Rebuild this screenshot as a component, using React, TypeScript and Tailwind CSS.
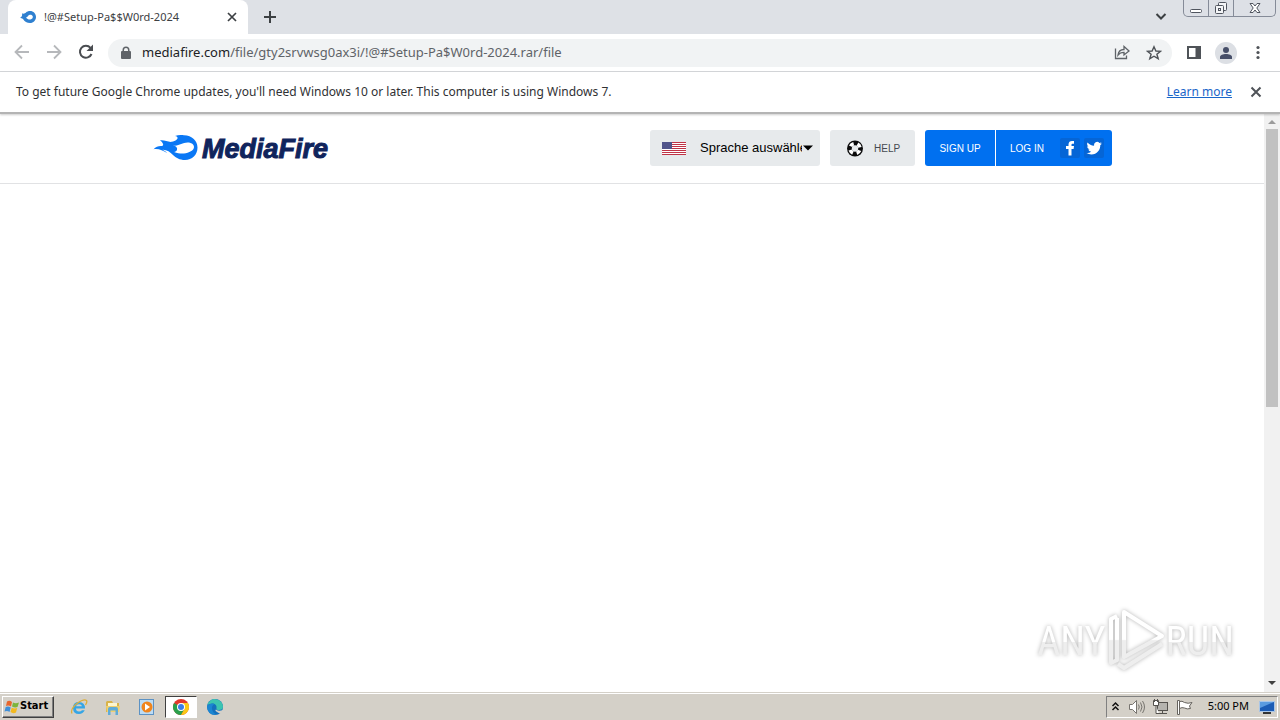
import type { ReactNode } from "react";

const iconButton = "flex shrink-0 items-center justify-center";

function FlameMark({ className, fill }: { className: string; fill: string }) {
  return (
    <svg viewBox="0 0 46 26" className={className} fill={fill} aria-hidden="true">
      <path
        fillRule="evenodd"
        d="M0.500 14.200C3 11.800 5.500 10.800 8.500 11C10.500 11 10.500 9.500 9.500 8C9 7 8 6 7 5.500C11 4.500 15 7.500 19 6.800C21.500 6.400 24 5 24.500 3.500C25 2.300 24 1.200 22 0.900C25 0 28 0 31 0.300C39 0.600 44.500 6 44.500 12.500C44.500 20 39 25 32 25C26.500 25 23 22.800 20 20C17 17 14 14.500 9.500 14.700C11.500 15.500 13 16.500 14 18C10 15.500 5 13 0.500 14.200ZM20 10.500C23 11 24.700 12.800 24 14.800C23.500 16.200 22.500 16.800 21 17C25 18.300 28 18.800 31 18.400C36 18 41 15.500 41 12C41 9 37.500 7.500 34.500 7.600C29 7.700 26 11.500 20 10.500Z"
      />
    </svg>
  );
}

function TabStrip() {
  return (
    <div className="flex h-[34px] items-start bg-[#dee1e6] pl-2">
      <div className="flex h-[34px] w-60 items-center rounded-t-lg bg-white pl-3 pr-2.5 text-[#3c4043]">
        <svg viewBox="0 0 16 16" className="size-4 shrink-0" aria-hidden="true">
          <path
            fillRule="evenodd"
            fill="#2f80d0"
            d="M0 9C2 7.500 2.500 6.500 2 4.500C4 4.800 5 4.600 6 3.500C7 2.500 8.500 2 10 2C13.500 2 16 4.700 16 8C16 11.300 13.500 14 10 14C7 14 4.500 12.500 3 10C2 9 1 9 0 9ZM6 8.500C7.500 10.500 9 10.600 10.500 10.400C12 10.200 13 9 12.800 7.500C12.500 6 11 5.400 9.700 5.700C8 6 8 8 6 8.500Z"
          />
        </svg>
        <span className="ml-2 flex-1 text-[11px]">!@#Setup-Pa$$W0rd-2024</span>
        <button aria-label="Close tab" className={`${iconButton} size-3`}>
          <svg viewBox="0 0 12 12" className="size-3" stroke="#3c4043" strokeWidth="1.700">
            <path d="M2 2L10 10M10 2L2 10" />
          </svg>
        </button>
      </div>
      <button aria-label="New tab" className={`${iconButton} ml-3.5 mt-2.5 size-4`}>
        <svg viewBox="0 0 16 16" className="size-4" stroke="#3c4043" strokeWidth="2">
          <path d="M8 1V13M2 7H14" />
        </svg>
      </button>
      <div className="flex-1" />
      <button aria-label="Search tabs" className={`${iconButton} mr-4 mt-2.5 size-3`}>
        <svg viewBox="0 0 12 12" className="size-3" fill="none" stroke="#3c4043" strokeWidth="2">
          <path d="M1.500 4L6 8.500L10.500 4" />
        </svg>
      </button>
      <div className="mr-1 flex h-[17px] overflow-hidden rounded-b-[5px] border border-t-0 border-[#858b98] bg-[#dde0e6]">
        <button aria-label="Minimize" className={`${iconButton} w-[25px] border-r border-[#858b98]`}>
          <svg viewBox="0 0 14 14" className="size-3.5" fill="#fff" stroke="#50555f">
            <rect x="1.500" y="8.500" width="11" height="3" rx="1" />
          </svg>
        </button>
        <button aria-label="Restore" className={`${iconButton} w-[25px] border-r border-[#858b98]`}>
          <svg viewBox="0 0 14 14" className="size-3.5" fill="#f4f5f7" stroke="#50555f">
            <rect x="4.500" y="1.500" width="8" height="8" rx="1" />
            <rect x="1.500" y="4.500" width="8" height="8" rx="1" />
            <rect x="4.500" y="7.500" width="2" height="2" />
          </svg>
        </button>
        <button aria-label="Close window" className={`${iconButton} w-[41px]`}>
          <svg viewBox="0 0 14 14" className="size-3.5" fill="#fff" stroke="#50555f">
            <path d="M2 2.500H5L7 5L9 2.500H12L8.800 7L12 11.500H9L7 9L5 11.500H2L5.200 7Z" />
          </svg>
        </button>
      </div>
    </div>
  );
}

function Toolbar() {
  return (
    <div className="flex h-[38px] items-center border-b border-[#d5d7da] bg-white pl-3 pr-3 text-[#5f6368]">
      <button aria-label="Back" className={`${iconButton} size-5`}>
        <svg viewBox="0 0 20 20" className="size-5" fill="none" stroke="#b6b8bb" strokeWidth="1.800">
          <path d="M17 9H4M10 2.500L3.500 9L10 15.500" />
        </svg>
      </button>
      <button aria-label="Forward" className={`${iconButton} ml-3 size-5`}>
        <svg viewBox="0 0 20 20" className="size-5" fill="none" stroke="#b6b8bb" strokeWidth="1.800">
          <path d="M3 9H16M10 2.500L16.500 9L10 15.500" />
        </svg>
      </button>
      <button aria-label="Reload" className={`${iconButton} ml-3 size-5`}>
        <svg viewBox="0 0 20 20" className="size-5" fill="none" stroke="#4a4d51" strokeWidth="2">
          <path d="M15.500 11A6 6 0 1 1 14.500 4.800" />
          <path d="M17 1.500V8H10.500Z" fill="#4a4d51" stroke="none" />
        </svg>
      </button>
      <div className="ml-3 flex h-7 flex-1 items-center rounded-full bg-[#f1f3f4] pl-3 pr-2.5">
        <svg viewBox="0 0 12 14" className="h-3.5 w-3 shrink-0" aria-hidden="true">
          <path
            fill="#5f6368"
            fillRule="evenodd"
            d="M2.500 5V4A3.500 3.500 0 0 1 9.500 4V5H10Q11 5 11 6V12Q11 13 10 13H2Q1 13 1 12V6Q1 5 2 5ZM4 5H8V4A2 2 0 0 0 4 4Z"
          />
        </svg>
        <div className="ml-2.5 flex-1 whitespace-nowrap text-[13px]">
          <span className="text-[#202124]">mediafire.com</span>
          <span>/file/gty2srvwsg0ax3i/!@#Setup-Pa$W0rd-2024.rar/file</span>
        </div>
        <button aria-label="Share" className={`${iconButton} size-4`}>
          <svg viewBox="0 0 16 16" className="size-4" fill="none" stroke="#5f6368" strokeWidth="1.300">
            <path d="M1.500 3.500V13.500H12.500V10.500" />
            <path d="M4 10C4.500 6 7 4.500 10 4.500V1.500L15 6L10 10V7.300C7.500 7.300 5.500 8 4 10Z" />
          </svg>
        </button>
        <button aria-label="Bookmark this page" className={`${iconButton} ml-4 size-4`}>
          <svg viewBox="0 0 16 16" className="size-4" fill="none" stroke="#4f5358" strokeWidth="1.400">
            <path d="M8 1.800L9.900 6L14.500 6.300L10.900 9.200L12.200 13.700L8 11.200L3.800 13.700L5.100 9.200L1.500 6.300L6.100 6Z" />
          </svg>
        </button>
      </div>
      <button aria-label="Side panel" className={`${iconButton} ml-3.5 size-4`}>
        <svg viewBox="0 0 16 16" className="size-4" aria-hidden="true">
          <rect x="2" y="2" width="12" height="11" fill="none" stroke="#4f5358" strokeWidth="2" />
          <rect x="9.500" y="2" width="5" height="11" fill="#4f5358" />
        </svg>
      </button>
      <button aria-label="Profile" className={`${iconButton} ml-[13px] size-[22px] rounded-full bg-[#dcdfe4]`}>
        <svg viewBox="0 0 16 16" className="size-4" fill="#474f69">
          <circle cx="8" cy="5" r="3" />
          <path d="M2 14V12C2 10 5 9 8 9C11 9 14 10 14 12V14Z" />
        </svg>
      </button>
      <button aria-label="Menu" className={`${iconButton} -mr-px ml-3 size-5`}>
        <svg viewBox="0 0 20 20" className="size-5" fill="#4f5358">
          <circle cx="9" cy="4.500" r="1.600" />
          <circle cx="9" cy="9.500" r="1.600" />
          <circle cx="9" cy="14.500" r="1.600" />
        </svg>
      </button>
    </div>
  );
}

function InfoBar() {
  return (
    <div className="relative flex h-[42px] items-center border-b-2 border-[#b4b4b4] bg-white pl-4 pr-[18px] text-[12px] text-[#303134] shadow-[0_1px_2px_rgba(0,0,0,0.2)]">
      <span className="flex-1">
        To get future Google Chrome updates, you'll need Windows 10 or later. This computer is using Windows 7.
      </span>
      <a href="#learn" className="text-[#1a66c9] underline">
        Learn more
      </a>
      <button aria-label="Dismiss" className={`${iconButton} ml-[18px] size-3`}>
        <svg viewBox="0 0 12 12" className="size-3" stroke="#4f5358" strokeWidth="2">
          <path d="M1.500 1.500L10.500 10.500M10.500 1.500L1.500 10.500" />
        </svg>
      </button>
    </div>
  );
}

function Flag() {
  return (
    <svg viewBox="0 0 24 13" className="h-[13px] w-6 shrink-0" aria-hidden="true">
      <rect width="24" height="13" fill="#fff" />
      {[0, 2, 4, 6, 8, 10, 12].map((y) => (
        <rect key={y} y={y} width="24" height="1" fill="#bf3346" />
      ))}
      <rect width="10" height="7" fill="#50548a" />
    </svg>
  );
}

function SiteHeader() {
  return (
    <header className="flex h-[70px] justify-center border-b border-[#e1e2e4] font-['Liberation_Sans',sans-serif]">
      <div className="flex h-[68px] w-[960px] items-center">
        <a href="#home" aria-label="MediaFire" className="flex items-center pl-px">
          <FlameMark className="h-[26px] w-[46px]" fill="#0a78f5" />
          <svg viewBox="0 0 144 34" className="h-[34px] w-36" aria-hidden="true">
            <text
              x="3"
              y="27"
              fontFamily="Liberation Sans"
              fontSize="27"
              fontWeight="bold"
              fontStyle="italic"
              fill="#10245c"
              stroke="#10245c"
            >
              MediaFire
            </text>
          </svg>
        </a>
        <div className="flex-1" />
        <div className="flex h-9 w-[170px] items-center rounded-[3px] bg-[#e7eaec] pl-3 pr-1.5">
          <Flag />
          <select
            aria-label="Language"
            className="ml-3.5 min-w-0 flex-1 appearance-none overflow-hidden bg-transparent text-[13px] text-black outline-none"
          >
            <option>Sprache auswählen</option>
          </select>
          <svg viewBox="0 0 12 6" className="h-1.5 w-3 shrink-0" aria-hidden="true">
            <path d="M1 0.500H11L6 5.500Z" />
          </svg>
        </div>
        <a
          href="#help"
          className="ml-2.5 flex h-9 w-[85px] items-center rounded-[3px] bg-[#e7eaec] pl-4 text-[10px] text-[#45494f]"
        >
          <svg viewBox="0 0 18 18" className="size-[18px]" aria-hidden="true">
            <circle cx="9" cy="9.500" r="8" fill="#0b0b0b" />
            <circle cx="9" cy="9.500" r="5" fill="none" stroke="#fff" strokeWidth="3.600" strokeDasharray="3.927 3.927" strokeDashoffset="-1.963" />
            <circle cx="9" cy="9.500" r="3.200" fill="#e7eaec" />
          </svg>
          <span className="ml-2.5">HELP</span>
        </a>
        <div className="ml-2.5 flex h-9 overflow-hidden rounded-[3px] bg-[#0070f0] text-[10px] text-white">
          <a href="#signup" className="flex w-[71px] items-center justify-center border-r border-white">
            SIGN UP
          </a>
          <a href="#login" className="flex w-[116px] items-center pl-3.5">
            <span className="flex-1">LOG IN</span>
            <span className="mr-2 flex gap-1">
              <svg viewBox="0 0 20 20" className="size-5" aria-hidden="true">
                <rect width="20" height="20" rx="2" fill="#0565d6" />
                <path
                  fill="#fff"
                  d="M8.500 17.500V11H6V8H8.500V6.500C8.500 4 10 3 12 3H14V5.700H12.700C11.700 5.700 11.500 6.200 11.500 7V8H14L13.600 11H11.500V17.500Z"
                />
              </svg>
              <svg viewBox="0 0 20 20" className="size-5" aria-hidden="true">
                <rect width="20" height="20" rx="2" fill="#0565d6" />
                <path
                  fill="#fff"
                  transform="translate(2.500 2.500) scale(0.640)"
                  d="M23.950 4.570a10 10 0 0 1-2.820.77 4.960 4.960 0 0 0 2.160-2.720 9.900 9.900 0 0 1-3.130 1.190 4.920 4.920 0 0 0-8.380 4.480C7.690 8.090 4.070 6.130 1.640 3.160a4.820 4.820 0 0 0-.67 2.470c0 1.710.87 3.210 2.190 4.100a4.900 4.900 0 0 1-2.230-.62v.06a4.920 4.920 0 0 0 3.950 4.830 5 5 0 0 1-2.210.08 4.940 4.940 0 0 0 4.600 3.420A9.870 9.870 0 0 1 0 19.540a14 14 0 0 0 7.550 2.210c9.050 0 14-7.500 14-13.980 0-.21 0-.42-.02-.63a9.940 9.940 0 0 0 2.460-2.550z"
                />
              </svg>
            </span>
          </a>
        </div>
      </div>
    </header>
  );
}

function Scrollbar() {
  return (
    <div className="flex w-4 shrink-0 flex-col items-center bg-[#f1f1f1]">
      <svg viewBox="0 0 16 15" className="h-[15px] w-4" aria-hidden="true">
        <path d="M4 10H12L8 6Z" fill="#9b9b9b" />
      </svg>
      <div className="h-[278px] w-3 bg-[#c1c1c1]" />
      <div className="flex-1" />
      <svg viewBox="0 0 16 16" className="size-4" aria-hidden="true">
        <path d="M4 5H12L8 9Z" fill="#404040" />
      </svg>
    </div>
  );
}

const watermarkWord =
  "mt-1 bg-linear-to-b from-white from-50% to-[#eeeeee] to-50% bg-clip-text text-[40px] leading-[52px] text-transparent";

function Watermark() {
  return (
    <div className="absolute bottom-5 right-[30px] flex items-center font-['Roboto_Condensed','Liberation_Sans_Narrow','Liberation_Sans',sans-serif] drop-shadow-[0_0_2px_rgba(0,0,0,0.3)]">
      <span className={watermarkWord}>ANY</span>
      <svg viewBox="69 0 60 64" className="h-16 w-[60px]" fill="none" aria-hidden="true">
        <defs>
          <linearGradient id="markFade" x1="0" y1="0" x2="0" y2="64" gradientUnits="userSpaceOnUse">
            <stop offset="0.49" stopColor="#ffffff" />
            <stop offset="0.51" stopColor="#eeeeee" />
          </linearGradient>
        </defs>
        <g stroke="url(#markFade)" strokeWidth="4" strokeLinejoin="round">
          <path d="M87 4L125 28L87 49V4Z" />
          <path d="M80 8L74 11V55L80 52V10" />
          <path d="M81 56L87 60L125 36" />
        </g>
      </svg>
      <span className={watermarkWord}>RUN</span>
    </div>
  );
}

function TaskButton({ label, active, children }: { label: string; active?: boolean; children: ReactNode }) {
  return (
    <button
      aria-label={label}
      className={
        active
          ? "flex h-[22px] w-8 items-center justify-center border border-b-white border-l-[#404040] border-r-white border-t-[#404040] bg-white"
          : "flex h-[22px] w-8 items-center justify-center"
      }
    >
      <svg viewBox="0 0 18 18" className="size-[18px]">
        {children}
      </svg>
    </button>
  );
}

function Taskbar() {
  return (
    <footer className="flex h-7 shrink-0 items-center border-t border-[#d4d0c8] bg-[#d4d0c8] pl-0.5 pr-0.5 shadow-[inset_0_1px_0_#fff]">
      <button className="flex h-[22px] w-[52px] items-center border border-b-[#404040] border-l-white border-r-[#404040] border-t-white pl-px text-[11px] font-bold text-black shadow-[inset_-1px_-1px_0_#808080]">
        <svg viewBox="0 0 16 16" className="size-4 shrink-0" aria-hidden="true">
          <path d="M3 2.500Q5.500 1 8 3L7 7.500Q4.500 6 2 7Z" fill="#e8662c" />
          <path d="M9 3.500Q11.500 5 15 3.500L13.500 8Q11 9 8 7.500Z" fill="#7db43c" />
          <path d="M1.700 8Q4.500 7 6.700 8.500L5.500 13Q3.500 11.500 0.500 12.500Z" fill="#3f8fd8" />
          <path d="M7.700 8.700Q10.500 10 13.200 9L12 13.500Q9 15 6.500 13Z" fill="#f3b91f" />
        </svg>
        <span className="font-['DejaVu_Sans_Condensed','Noto_Sans',sans-serif]">Start</span>
      </button>
      <nav className="ml-[9px] flex gap-0.5">
        <TaskButton label="Internet Explorer">
          <path d="M15 10.500H6Q6 13.500 9 13.500Q11 13.500 12 12.300H14.800Q13 16 9 16Q3 16 3 9.700Q3 4 9 4Q15 4 15 10.500ZM6 8.300H12Q11.700 6.200 9 6.200Q6.500 6.200 6 8.300Z" fill="#35a5e5" fillRule="evenodd" />
          <path d="M2 15.500Q0 11 7 5.500Q14 0.500 16.500 2.500Q17.500 3.800 15.500 7" fill="none" stroke="#dcae3a" strokeWidth="1.300" />
        </TaskButton>
        <TaskButton label="File Explorer">
          <path d="M2 4V14H15V5H9L8 3H3Z" fill="#d9b34a" />
          <path d="M4 5H13V9H4Z" fill="#fdf6cf" />
          <path d="M2 8H16L15 14H3Z" fill="#efd070" />
          <path d="M4 17V11Q4 9 6 9H12Q14 9 14 11V17H11.500V12.500H6.500V17Z" fill="#5fabd8" />
        </TaskButton>
        <TaskButton label="Media Player">
          <rect x="1.500" y="1.500" width="14" height="15" fill="#bcdcf5" stroke="#5c92c4" />
          <circle cx="9" cy="9" r="5.500" fill="#f0851d" />
          <path d="M7 5.500L12 9L7 12.500Z" fill="#fff" />
        </TaskButton>
        <TaskButton label="Chrome" active>
          <circle cx="9" cy="9" r="8" fill="#e2382b" />
          <path d="M9 9L2.070 5A8 8 0 0 0 9 17L12.500 11Z" fill="#2aa04c" />
          <path d="M9 17A8 8 0 0 0 15.930 5H9L12.500 11Z" fill="#fbc816" />
          <circle cx="9" cy="9" r="4" fill="#fff" />
          <circle cx="9" cy="9" r="3" fill="#3b7de8" />
        </TaskButton>
        <TaskButton label="Edge">
          <circle cx="9" cy="9" r="8" fill="#1470bd" />
          <path d="M1.300 7A8 8 0 0 1 17 8.500Q17 12 13 12Q10 12 10.500 10Q11 6.500 7.500 5.500Q4 5 1.300 7Z" fill="#3cc4b0" />
          <path d="M1 8.500Q4 4.500 8.500 6Q5.500 7.500 6 11Q6.500 15 11 16.700Q2 18 1 8.500Z" fill="#1b86d2" />
          <path d="M10 11.500Q12.500 13.700 17 12L18 15L15.500 15.500Q13 15.500 11 14Q8.500 12.500 10 11.500Z" fill="#d4d0c8" />
        </TaskButton>
      </nav>
      <div className="flex-1" />
      <div className="flex h-[22px] items-center border border-b-white border-l-[#808080] border-r-white border-t-[#808080] pl-1 pr-0.5">
        <svg viewBox="0 0 9 12" className="h-3 w-[9px]" fill="none" stroke="#111" strokeWidth="1.500" aria-hidden="true">
          <path d="M1.500 5L4.500 2L7.500 5M1.500 9L4.500 6L7.500 9" />
        </svg>
        <svg viewBox="0 0 18 16" className="ml-2 h-4 w-[18px]" fill="#fff" stroke="#77746f" aria-hidden="true">
          <path d="M1.500 5.500H4.500L8.500 1.500V14.500L4.500 10.500H1.500Z" />
          <path d="M10.500 5.500Q12 8 10.500 10.500M12.500 3.500Q15.500 8 12.500 12.500M14.500 2Q18.500 8 14.500 14" fill="none" />
        </svg>
        <svg viewBox="0 0 18 16" className="ml-1.5 h-4 w-[18px]" fill="#fff" stroke="#55524e" aria-hidden="true">
          <rect x="5.500" y="3.500" width="10" height="8" fill="#b5b3ae" />
          <path d="M7 14.500H15M10.500 12V14" />
          <path d="M1.500 1.500H6.500V6.500H1.500ZM4 6.500V14.500H7M2.500 0V3M5.500 0V3" />
        </svg>
        <svg viewBox="0 0 18 16" className="ml-1.5 h-4 w-[18px]" fill="#fff" stroke="#66635e" aria-hidden="true">
          <path d="M1.500 1.500H3.500V15.500H1.500Z" />
          <path d="M3.500 2.500Q6 1.500 8.500 3.500Q12 5 16 3.500L13.500 7L14.500 9.500Q11 10.500 8.500 9Q6 8 3.500 9.500Z" />
        </svg>
        <time className="ml-3.5 whitespace-nowrap text-[11px] text-black">5:00 PM</time>
        <svg viewBox="0 0 16 16" className="ml-2.5 size-4" aria-hidden="true">
          <path d="M0.500 2.500H15.500V12.500H0.500Z" fill="#1c5cb5" stroke="#a9c6e8" />
          <path d="M1 3H15L1 9Z" fill="#5a9be0" />
          <path d="M4 14H12" stroke="#333" strokeWidth="2" />
        </svg>
      </div>
    </footer>
  );
}

export default function App() {
  return (
    <div className="flex min-h-screen flex-col bg-white font-['Noto_Sans',sans-serif]">
      <TabStrip />
      <Toolbar />
      <InfoBar />
      <div className="flex flex-1">
        <main className="relative flex-1">
          <SiteHeader />
          <Watermark />
        </main>
        <Scrollbar />
      </div>
      <Taskbar />
    </div>
  );
}
